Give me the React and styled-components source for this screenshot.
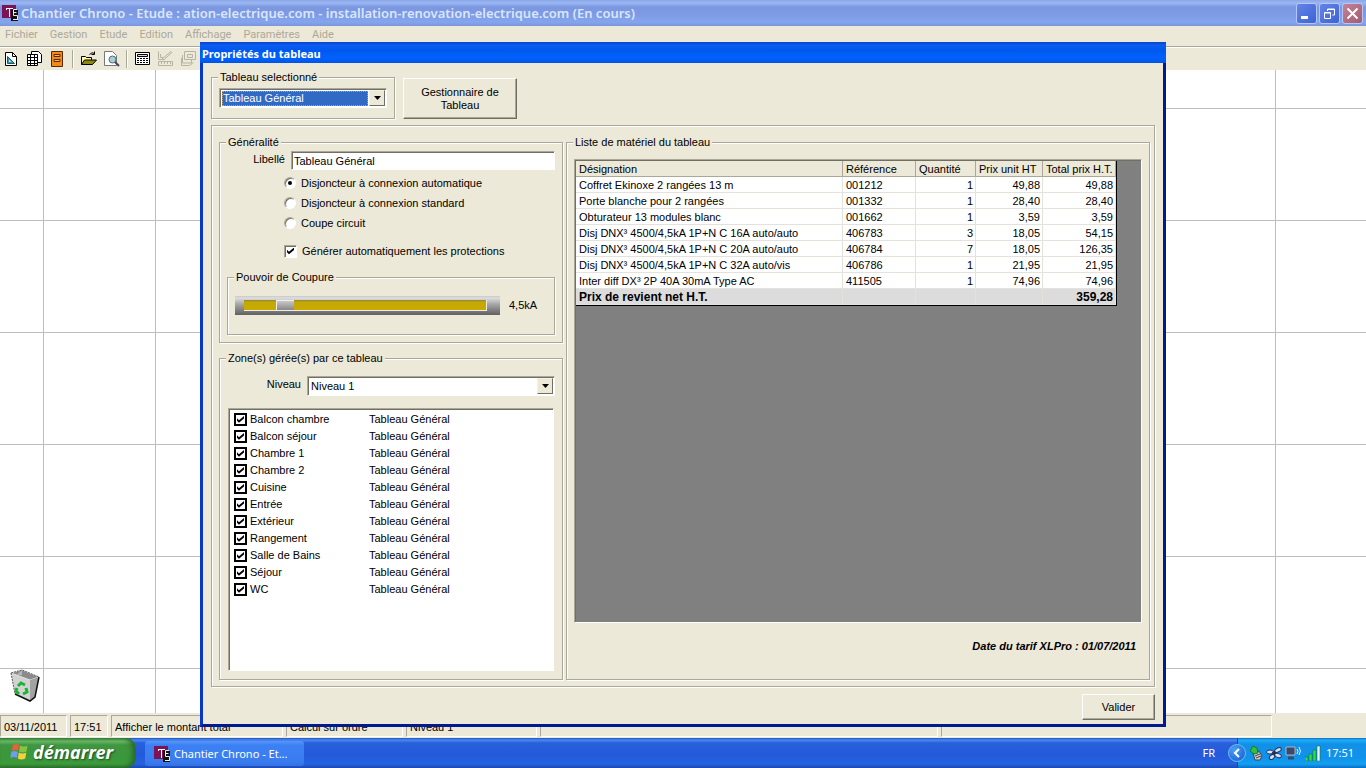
import React from 'react';
import styled, { createGlobalStyle, css } from 'styled-components';

const GlobalStyle = createGlobalStyle`
  * { box-sizing: border-box; }
  html, body { margin: 0; height: 100%; }
  body { font: 11px/13px "Liberation Sans", Arial, sans-serif; color: #000; overflow: hidden; }
  button, input, select { font: inherit; color: inherit; margin: 0; padding: 0; border-radius: 0; }
  fieldset, legend { margin: 0; padding: 0; min-width: 0; }
`;

const uiFont = '"Noto Sans", "Open Sans", sans-serif';
const menuFont = 'Roboto, "Liberation Sans", sans-serif';
const face = '#ece9d8';

const Screen = styled.div`
  position: relative;
  display: flex;
  flex-direction: column;
  height: 100vh;
  background: ${face};
`;

const AppTitle = styled.header`
  display: flex;
  align-items: center;
  flex: none;
  height: 26px;
  padding: 0 3px 0 2px;
  background: linear-gradient(#8aa5ea 0, #9bb8f2 3px, #7b97e0 7px, #7d9ae4 14px, #84a6ee 22px, #7c95dc 26px);
`;

const AppTitleText = styled.h1`
  flex: 1;
  margin: 0 0 0 3px;
  font: 600 13px/20px ${uiFont};
  color: #dbe6fb;
  white-space: nowrap;
`;

const CaptionButtons = styled.div`
  display: flex;
  gap: 2px;
`;

const CaptionButton = styled.button`
  display: grid;
  place-items: center;
  width: 21px;
  height: 21px;
  border: 1px solid #b5c8f5;
  border-radius: 3px;
  background: ${(p) => (p.$close ? 'linear-gradient(135deg, #c48296, #a35c72)' : 'linear-gradient(135deg, #6384e6, #3d62d6)')};
`;

const MenuBar = styled.nav`
  display: flex;
  flex: none;
  gap: 12px;
  height: 20px;
  padding: 1px 5px 3px;
`;

const MenuItem = styled.button`
  border: 0;
  background: none;
  font: 11px/14px ${menuFont};
  color: #aca899;
`;

const Toolbar = styled.div`
  display: flex;
  align-items: center;
  flex: none;
  height: 24px;
  border-top: 1px solid #aca899;
  box-shadow: inset 0 1px #fff;
`;

const ToolButton = styled.button`
  display: grid;
  place-items: center;
  width: 23px;
  height: 22px;
  border: 0;
  background: none;
`;

const ToolSeparator = styled.span`
  width: 2px;
  height: 18px;
  margin: 0 3px;
  border-left: 1px solid #aca899;
  border-right: 1px solid #fff;
`;

const Canvas = styled.main`
  display: flex;
  align-items: flex-end;
  flex: 1;
  min-height: 0;
  padding: 10px;
  background:
    linear-gradient(90deg, #bdbdbd 1px, transparent 1px) 43px 0 / 112px 100%,
    linear-gradient(#bdbdbd 1px, transparent 1px) 0 38px / 100% 112px,
    #fff;
`;

const StatusBar = styled.footer`
  display: flex;
  flex: none;
  gap: 3px;
  height: 25px;
  padding: 2px 0 1px;
`;

const StatusCell = styled.span`
  flex: 0 1 ${(p) => p.$width}px;
  padding: 5px 3px 0;
  border: 1px solid;
  border-color: #aca899 #fff #fff #aca899;
  white-space: nowrap;
  overflow: hidden;
`;

const Taskbar = styled.div`
  display: flex;
  align-items: stretch;
  flex: none;
  height: 30px;
  font: 11px/14px ${uiFont};
  color: #fff;
  background: linear-gradient(#1f50c0 0, #4a8af0 2px, #2860dc 5px, #225ad9 16px, #2663e0 26px, #1c47b0 30px);
`;

const StartButton = styled.button`
  display: flex;
  align-items: center;
  gap: 4px;
  width: 136px;
  padding: 0 0 2px 10px;
  border: 0;
  border-radius: 0 10px 10px 0;
  font: italic bold 18px/20px ${uiFont};
  color: #fff;
  text-shadow: 1px 1px 2px #1c4a1c;
  background: linear-gradient(#3b8a3b 0, #6fbd6c 3px, #3f963f 7px, #3a973a 20px, #3e9c3c 26px, #2a742b 30px);
  box-shadow: inset -4px 0 5px #276b2b;
`;

const TaskButton = styled.button`
  display: flex;
  align-items: center;
  gap: 4px;
  width: 159px;
  margin: 3px auto 2px 9px;
  padding: 0 9px;
  border: 0;
  border-radius: 3px;
  font: 11px/14px ${uiFont};
  color: #fff;
  background: linear-gradient(#5a96fa, #3c81f3 4px, #3a7cf0 20px, #3472e4);
`;

const Language = styled.span`
  align-self: center;
  margin-right: 22px;
`;

const Tray = styled.div`
  display: flex;
  align-items: center;
  gap: 3px;
  width: 129px;
  border-left: 1px solid #0b4fa8;
  background: linear-gradient(#0f6cc8 0, #1cb0f5 2px, #1290e8 6px, #1092ec 20px, #12a0f0 26px, #0c6cc4 30px);
`;

const TrayArrow = styled.button`
  display: grid;
  place-items: center;
  width: 18px;
  height: 18px;
  margin-left: -10px;
  border: 1px solid #7ab8f5;
  border-radius: 50%;
  background: radial-gradient(circle at 35% 30%, #4aa0f8, #0c5ad0);
`;

const Clock = styled.time`
  margin-left: 2px;
`;

const Overlay = styled.div`
  position: absolute;
  inset: 0;
  display: flex;
  justify-content: center;
  align-items: flex-start;
  padding-top: 42px;
  pointer-events: none;
`;

const Dialog = styled.section`
  display: flex;
  flex-direction: column;
  width: 966px;
  max-width: 100%;
  pointer-events: auto;
  background: ${face};
  border: solid #0831c0;
  border-width: 0 3px 3px;
  border-color: #0831c0 #001a90 #001a90 #0838c8;
`;

const DialogTitle = styled.h2`
  height: 21px;
  margin: 0 -3px;
  padding: 4px 2px 0;
  font: bold 11px/16px ${uiFont};
  color: #fff;
  background: linear-gradient(#0a42c8 0, #0c5cf0 3px, #0058ee 8px, #0062fc 16px, #0054e6 21px);
`;

const DialogBody = styled.div`
  display: flex;
  flex-direction: column;
  padding: 8px 8px 4px;
`;

const TopRow = styled.div`
  display: flex;
  align-items: flex-end;
  gap: 8px;
  margin-bottom: 6px;
`;

const etched = css`
  border: 1px solid #aca899;
  box-shadow: 1px 1px #fff, inset 1px 1px #fff;
`;

const Group = styled.fieldset`
  ${etched}
  width: ${(p) => (p.$width ? `${p.$width}px` : 'auto')};
  padding: ${(p) => p.$pad};
`;

const Legend = styled.legend`
  margin-left: -1px;
  padding: 0 2px;
  background: ${face};
`;

const Panel = styled.div`
  ${etched}
  display: flex;
  gap: 3px;
  padding: 10px 4px 6px 7px;
`;

const LeftColumn = styled.div`
  display: flex;
  flex-direction: column;
  gap: 9px;
  flex: 0 0 344px;
`;

const ListGroup = styled(Group)`
  flex: 1;
`;

const PushButton = styled.button`
  width: ${(p) => p.$width}px;
  height: ${(p) => p.$height}px;
  padding: 0 12px;
  border: 1px solid;
  border-color: #fff #716f64 #716f64 #fff;
  box-shadow: inset -1px -1px #aca899;
  background: ${face};
`;

const sunken = css`
  border: 1px solid;
  border-color: #aca899 #fff #fff #aca899;
  box-shadow: inset 1px 1px #716f64;
`;

const ComboFrame = styled.div`
  ${sunken}
  display: flex;
  flex: 1;
  height: 20px;
  padding: 2px 1px 1px 2px;
  background: #fff;
`;

const ComboSelect = styled.select`
  appearance: none;
  flex: 1;
  min-width: 0;
  padding-left: 1px;
  border: 0;
  outline: ${(p) => (p.$active ? '1px dotted #e0a030' : '0')};
  outline-offset: -1px;
  color: ${(p) => (p.$active ? '#fff' : '#000')};
  background: ${(p) => (p.$active ? '#316ac5' : '#fff')};
`;

const ComboArrow = styled.span`
  display: grid;
  place-items: center;
  width: 16px;
  margin: -1px 0 0 1px;
  border: 1px solid;
  border-color: #f4f2e8 #716f64 #716f64 #f4f2e8;
  background: ${face};
`;

const FieldRow = styled.div`
  display: grid;
  grid-template-columns: ${(p) => p.$label}px 1fr;
  column-gap: 6px;
  & > label { padding-top: 2px; text-align: right; }
`;

const TextBox = styled.input`
  ${sunken}
  height: 19px;
  padding: 1px 2px 0;
  background: #fff;
`;

const Options = styled.div`
  margin: 3px 0 10px 57px;
`;

const OptionLabel = styled.label`
  display: flex;
  align-items: center;
  gap: 5px;
  height: 20px;
  margin-top: ${(p) => (p.$spaced ? 8 : 0)}px;
`;

const Radio = styled.input`
  ${sunken}
  appearance: none;
  display: grid;
  place-items: center;
  width: 12px;
  height: 12px;
  border-radius: 50%;
  background: #fff;
  &:checked::after { content: ''; width: 4px; height: 4px; border-radius: 50%; background: #000; }
`;

const Check = styled.input`
  appearance: none;
  display: grid;
  place-items: center;
  width: 13px;
  height: 13px;
  background: #fff;
  ${(p) => (p.$flat ? css`border: 2px solid #000;` : sunken)}
  &:checked::after {
    content: '';
    width: 7px;
    height: 7px;
    background: #000;
    clip-path: polygon(0 32%, 28% 60%, 100% 0, 100% 36%, 28% 96%, 0 68%);
  }
`;

const SliderRow = styled.div`
  display: flex;
  align-items: center;
  gap: 9px;
`;

const SliderFrame = styled.div`
  width: 265px;
  height: 19px;
  padding: 4px 13px 4px 9px;
  background: linear-gradient(#c8c8c8 0, #dedede 2px, #a8a8a8 8px, #606060 19px);
`;

const Slider = styled.input`
  appearance: none;
  display: block;
  width: 100%;
  height: 11px;
  border-bottom: 1px solid #ececec;
  border-right: 1px solid #ececec;
  background: linear-gradient(#8f8440 0, #c4a804 2px, #c8aa00 10px);
  &::-webkit-slider-thumb {
    appearance: none;
    width: 18px;
    height: 10px;
    margin-top: -1px;
    border: solid #f0f0f0;
    border-width: 1px 0 0 1px;
    background: linear-gradient(#c8c8c8, #888);
  }
`;

const ZoneList = styled.ul`
  ${sunken}
  height: 263px;
  margin: 12px 1px 0;
  padding: 2px 0 0 5px;
  list-style: none;
  background: #fff;
`;

const ZoneRow = styled.li`
  display: grid;
  grid-template-columns: 135px 1fr;
  align-items: center;
  height: 17px;
`;

const ZoneLabel = styled.label`
  display: flex;
  align-items: center;
  gap: 3px;
`;

const GridArea = styled.div`
  ${sunken}
  height: 464px;
  padding: 1px;
  background: #808080;
`;

const MaterialTable = styled.table`
  table-layout: fixed;
  width: 541px;
  border-collapse: separate;
  border-spacing: 0;
  border: solid #000;
  border-width: 0 1px 1px 0;
  background: #fff;
`;

const HeadCell = styled.th`
  width: ${(p) => p.$width}px;
  height: 16px;
  padding: 1px 3px 0;
  border: solid #aca899;
  border-width: 0 1px 1px 0;
  font-weight: normal;
  text-align: left;
  white-space: nowrap;
  background: ${face};
`;

const Cell = styled.td`
  height: 16px;
  padding: 1px 2px 0 3px;
  border: solid #e4e2da;
  border-width: 0 1px 1px 0;
  text-align: ${(p) => (p.$number ? 'right' : 'left')};
  white-space: nowrap;
  ${(p) => p.$total && css`
    font-weight: bold;
    font-size: 12px;
    background: #dcdcdc;
  `}
`;

const TariffDate = styled.p`
  margin: 17px 6px 0 0;
  text-align: right;
  font-weight: bold;
  font-style: italic;
`;

const Actions = styled.div`
  display: flex;
  justify-content: flex-end;
  margin-top: 7px;
`;

function AppIcon() {
  return (
    <svg width="16" height="16" viewBox="0 0 16 16" aria-hidden="true">
      <path d="M0 0h14v13H0z" fill="#7d1257" />
      <path d="M9 4h7v12H9z" fill="#111" />
      <path d="M4 3.500h7M7.500 3v9M4.500 5v-2" stroke="#fff" fill="none" />
      <path d="M11.500 4.500h4M11.500 7.500h3M11.500 4.500v6M11.500 10.500h4v4M11 14.500h5" stroke="#eee" fill="none" />
    </svg>
  );
}

function WindowsFlag() {
  return (
    <svg width="19" height="18" viewBox="0 0 19 18" aria-hidden="true">
      <path d="M3 2q3-2 6 0l-1 6q-3-2-6.500 0z" fill="#e8603a" />
      <path d="M10 2.500q4 2 7.500 0l-1 6q-4 2-7.500 0z" fill="#85c440" />
      <path d="M1.300 9q3-2 6.500 0l-1 6q-3-2-6.500 0z" fill="#6d9cf0" />
      <path d="M8.800 9.500q4 2 7.500 0l-1 6q-4 2-7.500 0z" fill="#f6cf3c" />
    </svg>
  );
}

function RecycleBin() {
  return (
    <svg width="31" height="34" viewBox="0 0 31 34" aria-hidden="true">
      <path d="M1 4l11-3 17 7-4 20-5 4-15-7z" fill="#d2d2d2" />
      <path d="M1 4l11-3 17 7-9 3z" fill="#8b8b8b" stroke="#e4e4e4" />
      <path d="M12 1v5l-5 0z" fill="#b8b8b8" />
      <path d="M20 11l9-3-4 20-5 4z" fill="#a2a2a2" />
      <path d="M1 4l11-3 17 7M1 4l4 21" fill="none" stroke="#555" strokeDasharray="2 1" />
      <path d="M29 8l-4 20-5 4-15-7" fill="none" stroke="#111" strokeWidth="1.500" />
      <path d="M8 17l3-3 4 2M16 19l1 4-4 2M9 25l-3-3 1-3" fill="none" stroke="#18b432" strokeWidth="3" />
    </svg>
  );
}

const toolIcons = {
  plan: (
    <>
      <path d="M2.500 2.500h7l4 4v9h-11z" fill="#fff" stroke="#000" />
      <path d="M9.500 2.500v4h4" fill="none" stroke="#000" />
      <path d="M4.500 6.500v7h7z" fill="#3f9aa4" stroke="#1c5a64" />
      <path d="M6.500 10.500v1h1z" fill="#fff" stroke="#d8f4f8" />
    </>
  ),
  sheet: (
    <>
      <path d="M5.500 1.500h7l3 3v8h-10z" fill="#fff" stroke="#000" />
      <path d="M1.500 4.500h10v11h-10z" fill="#fff" stroke="#000" />
      <path d="M1.500 7.500h10M1.500 10.500h10M1.500 13.500h10M4.500 4.500v11M8.500 4.500v11" fill="none" stroke="#000" />
    </>
  ),
  board: (
    <>
      <path d="M2.500 1.500h11v15h-11z" fill="#f08a1c" stroke="#5a2800" />
      <path d="M5 4.500h6v2H5zM5 9.500h6v2H5z" fill="#ffb860" stroke="#5a2800" />
    </>
  ),
  open: (
    <>
      <path d="M1.500 14.500v-8h4l1 1h5v3" fill="#fff79a" stroke="#000" />
      <path d="M1.500 14.500l3-4.500h12l-4 4.500z" fill="#8a8a10" stroke="#000" />
      <path d="M9.500 4.500q2.500-3 5-1M14.500 1.500v3h-3" fill="none" stroke="#000" />
    </>
  ),
  preview: (
    <>
      <path d="M1.500 1.500h8l4 4v10h-12z" fill="#fff" stroke="#777" />
      <circle cx="9.500" cy="9.500" r="3.500" fill="#9fd0dc" stroke="#666" />
      <path d="M12 12l4 4" stroke="#446" strokeWidth="2" />
    </>
  ),
  calc: (
    <>
      <path d="M1.500 2.500h14v12h-14z" fill="#fff" stroke="#000" />
      <path d="M3.500 4.500h10v2h-10z" fill="#d8d8d8" stroke="#000" />
      <path d="M3 8.500h11M3 10.500h11M3 12.500h11" stroke="#000" strokeDasharray="2 1" />
    </>
  ),
  measure: <path d="M1.500 1.500v8h6M3.500 4v3.500h3M5 9l9-7.500 1 1-8.500 7.500M1.500 11.500h14v4h-14zM4.500 12v2M7.500 12v2M10.500 12v2M13.500 12v2" fill="none" stroke="#b8b4a4" />,
  layers: <path d="M4.500 1.500h11v8h-11zM7.500 4.500h5v3h-5zM2.500 5v8h9v-3M1.500 8v7.500h8l4-3" fill="none" stroke="#b8b4a4" />,
};

function Tool({ name, label }) {
  return (
    <ToolButton type="button" aria-label={label}>
      <svg width="17" height="17" viewBox="0 0 17 17" aria-hidden="true">{toolIcons[name]}</svg>
    </ToolButton>
  );
}

function Combo({ id, label, options, active }) {
  return (
    <ComboFrame>
      <ComboSelect id={id} aria-label={label} $active={active}>
        {options.map((o) => <option key={o}>{o}</option>)}
      </ComboSelect>
      <ComboArrow aria-hidden="true">
        <svg width="7" height="4" viewBox="0 0 7 4"><path d="M0 0h7L3.500 4z" /></svg>
      </ComboArrow>
    </ComboFrame>
  );
}

const menus = ['Fichier', 'Gestion', 'Etude', 'Edition', 'Affichage', 'Paramètres', 'Aide'];

const zones = ['Balcon chambre', 'Balcon séjour', 'Chambre 1', 'Chambre 2', 'Cuisine', 'Entrée',
  'Extérieur', 'Rangement', 'Salle de Bains', 'Séjour', 'WC'];

const columns = [['Désignation', 267], ['Référence', 73], ['Quantité', 60], ['Prix unit HT', 67], ['Total prix H.T.', 73]];

const items = [
  ['Coffret Ekinoxe 2 rangées 13 m', '001212', '1', '49,88', '49,88'],
  ['Porte blanche pour 2 rangées', '001332', '1', '28,40', '28,40'],
  ['Obturateur 13 modules blanc', '001662', '1', '3,59', '3,59'],
  ['Disj DNX³ 4500/4,5kA 1P+N C 16A auto/auto', '406783', '3', '18,05', '54,15'],
  ['Disj DNX³ 4500/4,5kA 1P+N C 20A auto/auto', '406784', '7', '18,05', '126,35'],
  ['Disj DNX³ 4500/4,5kA 1P+N C 32A auto/vis', '406786', '1', '21,95', '21,95'],
  ['Inter diff DX³ 2P 40A 30mA Type AC', '411505', '1', '74,96', '74,96'],
];

const statusCells = [['03/11/2011', 67], ['17:51', 38], ['Afficher le montant total', 172], ['Calcul sur ordre', 117],
  ['Niveau 1', 131], ['', 398], ['', 331]];

const breakers = ['Disjoncteur à connexion automatique', 'Disjoncteur à connexion standard', 'Coupe circuit'];

function GeneralGroup() {
  return (
    <Group $pad="2px 7px 7px">
      <Legend>Généralité</Legend>
      <FieldRow $label={58}>
        <label htmlFor="libelle">Libellé</label>
        <TextBox id="libelle" defaultValue="Tableau Général" />
      </FieldRow>
      <Options>
        {breakers.map((b, i) => (
          <OptionLabel key={b}>
            <Radio type="radio" name="breaker" defaultChecked={i === 0} />
            {b}
          </OptionLabel>
        ))}
        <OptionLabel $spaced>
          <Check type="checkbox" defaultChecked />
          Générer automatiquement les protections
        </OptionLabel>
      </Options>
      <Group $pad="12px 7px 19px">
        <Legend>Pouvoir de Coupure</Legend>
        <SliderRow>
          <SliderFrame>
            <Slider id="pouvoir" type="range" min="0" max="7" defaultValue="1" aria-label="Pouvoir de Coupure" />
          </SliderFrame>
          <output htmlFor="pouvoir">4,5kA</output>
        </SliderRow>
      </Group>
    </Group>
  );
}

function ZonesGroup() {
  return (
    <Group $pad="11px 7px 8px">
      <Legend>Zone(s) gérée(s) par ce tableau</Legend>
      <FieldRow $label={74}>
        <label htmlFor="niveau">Niveau</label>
        <Combo id="niveau" options={['Niveau 1']} />
      </FieldRow>
      <ZoneList>
        {zones.map((z) => (
          <ZoneRow key={z}>
            <ZoneLabel>
              <Check $flat type="checkbox" defaultChecked />
              {z}
            </ZoneLabel>
            <span>Tableau Général</span>
          </ZoneRow>
        ))}
      </ZoneList>
    </Group>
  );
}

function MaterialGroup() {
  return (
    <ListGroup $pad="10px 7px 0">
      <Legend>Liste de matériel du tableau</Legend>
      <GridArea>
        <MaterialTable>
          <thead>
            <tr>{columns.map(([c, w]) => <HeadCell key={c} $width={w}>{c}</HeadCell>)}</tr>
          </thead>
          <tbody>
            {items.map((row) => (
              <tr key={row[1]}>
                {row.map((v, i) => <Cell key={i} $number={i > 1}>{v}</Cell>)}
              </tr>
            ))}
          </tbody>
          <tfoot>
            <tr>
              <Cell $total>Prix de revient net H.T.</Cell>
              <Cell $total />
              <Cell $total />
              <Cell $total />
              <Cell $total $number>359,28</Cell>
            </tr>
          </tfoot>
        </MaterialTable>
      </GridArea>
      <TariffDate>Date du tarif XLPro : 01/07/2011</TariffDate>
    </ListGroup>
  );
}

export default function App() {
  return (
    <Screen>
      <GlobalStyle />
      <AppTitle>
        <AppIcon />
        <AppTitleText>Chantier Chrono - Etude : ation-electrique.com - installation-renovation-electrique.com (En cours)</AppTitleText>
        <CaptionButtons>
          <CaptionButton type="button" aria-label="Réduire">
            <svg width="13" height="13" viewBox="0 0 13 13"><path d="M1 9h7v3H1z" fill="#fff" /></svg>
          </CaptionButton>
          <CaptionButton type="button" aria-label="Restaurer">
            <svg width="13" height="13" viewBox="0 0 13 13"><path d="M4.500 4V2h7v6H9.500M1.500 5.500h6v6h-6zM1 6h7M4 2.500h8" fill="none" stroke="#fff" /></svg>
          </CaptionButton>
          <CaptionButton type="button" aria-label="Fermer" $close>
            <svg width="13" height="13" viewBox="0 0 13 13"><path d="M1.500 1.500l10 10M11.500 1.500l-10 10" stroke="#fff" strokeWidth="2" /></svg>
          </CaptionButton>
        </CaptionButtons>
      </AppTitle>
      <MenuBar>
        {menus.map((m) => <MenuItem key={m} type="button">{m}</MenuItem>)}
      </MenuBar>
      <Toolbar>
        <Tool name="plan" label="Plan" />
        <Tool name="sheet" label="Devis" />
        <Tool name="board" label="Tableau" />
        <ToolSeparator />
        <Tool name="open" label="Ouvrir" />
        <Tool name="preview" label="Aperçu" />
        <ToolSeparator />
        <Tool name="calc" label="Calcul" />
        <Tool name="measure" label="Mesure" />
        <Tool name="layers" label="Niveaux" />
      </Toolbar>
      <Canvas>
        <RecycleBin />
      </Canvas>
      <StatusBar>
        {statusCells.map(([t, w], i) => <StatusCell key={i} $width={w}>{t}</StatusCell>)}
      </StatusBar>
      <Taskbar>
        <StartButton type="button"><WindowsFlag />démarrer</StartButton>
        <TaskButton type="button"><AppIcon />Chantier Chrono - Et...</TaskButton>
        <Language>FR</Language>
        <Tray>
          <TrayArrow type="button" aria-label="Afficher les icônes">
            <svg width="8" height="10" viewBox="0 0 8 10"><path d="M6 1L2 5l4 4" fill="none" stroke="#fff" strokeWidth="2" /></svg>
          </TrayArrow>
          <svg width="14" height="16" viewBox="0 0 14 16" aria-hidden="true">
            <path d="M4 8l6-2 3 5-2 4-5 0z" fill="#c4ccd0" stroke="#445" />
            <path d="M6 11l5-2M7 13l5-2" stroke="#445" />
            <path d="M1 6l3-5 4 2 1 5-4 1z" fill="#2fc040" stroke="#1a7a28" />
          </svg>
          <svg width="16" height="14" viewBox="0 0 16 14" aria-hidden="true">
            <g fill="#d4e2fa" stroke="#22335c">
              <ellipse cx="4" cy="6" rx="3.500" ry="2" />
              <ellipse cx="12" cy="4" rx="3.500" ry="2" transform="rotate(-25 12 4)" />
              <ellipse cx="12" cy="9.500" rx="3.500" ry="2" transform="rotate(20 12 9.500)" />
              <ellipse cx="6" cy="11" rx="3" ry="2" transform="rotate(-40 6 11)" />
              <circle cx="8" cy="7" r="1.500" fill="#22335c" />
            </g>
          </svg>
          <svg width="17" height="16" viewBox="0 0 17 16" aria-hidden="true">
            <path d="M1 2h9v8H1z" fill="#3c4a66" stroke="#a8b4cc" />
            <path d="M3 13h6" stroke="#3c4a66" strokeWidth="3" />
            <path d="M12 4q2 2 0 5M14 2q3 4 0 8" fill="none" stroke="#e8f0ff" />
          </svg>
          <svg width="16" height="16" viewBox="0 0 16 16" aria-hidden="true">
            <path d="M0 12h3v4H0zM4 9h3v7H4zM8 5h3v11H8z" fill="#2fe03c" stroke="#136a1c" strokeWidth=".5" />
            <path d="M12 1h3v15h-3z" fill="#e8f4e8" stroke="#136a1c" strokeWidth=".5" />
          </svg>
          <Clock>17:51</Clock>
        </Tray>
      </Taskbar>
      <Overlay>
        <Dialog role="dialog" aria-labelledby="dialog-title">
          <DialogTitle id="dialog-title">Propriétés du tableau</DialogTitle>
          <DialogBody>
            <TopRow>
              <Group $width={184} $pad="4px 7px 10px">
                <Legend>Tableau selectionné</Legend>
                <Combo label="Tableau selectionné" options={['Tableau Général']} active />
              </Group>
              <PushButton type="button" $width={114} $height={41}>Gestionnaire de Tableau</PushButton>
            </TopRow>
            <Panel>
              <LeftColumn>
                <GeneralGroup />
                <ZonesGroup />
              </LeftColumn>
              <MaterialGroup />
            </Panel>
            <Actions>
              <PushButton type="button" $width={73} $height={26}>Valider</PushButton>
            </Actions>
          </DialogBody>
        </Dialog>
      </Overlay>
    </Screen>
  );
}
